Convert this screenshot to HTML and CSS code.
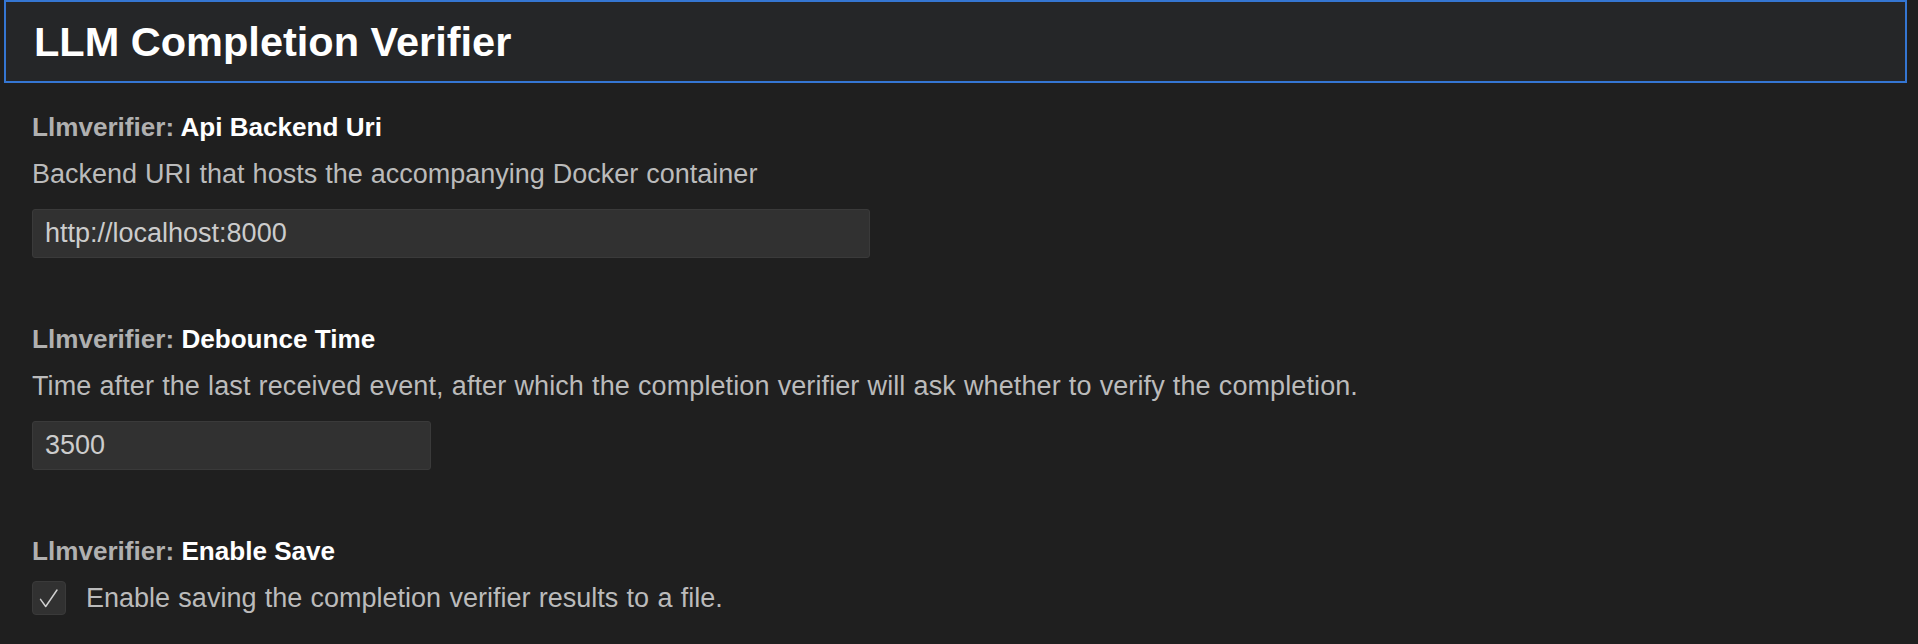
FILE: index.html
```html
<!DOCTYPE html>
<html lang="en">
<head>
<meta charset="utf-8">
<title>LLM Completion Verifier</title>
<link rel="stylesheet" href="styles.css">
</head>
<body>
  <header class="group-header">
    <h1 class="group-title">LLM Completion Verifier</h1>
  </header>
  <main class="settings">
    <section class="setting">
      <div class="setting-label"><span class="category">Llmverifier: </span><span class="name">Api Backend Uri</span></div>
      <div class="setting-desc">Backend URI that hosts the accompanying Docker container</div>
      <div class="text-input wide">http://localhost:8000</div>
    </section>
    <section class="setting">
      <div class="setting-label"><span class="category">Llmverifier: </span><span class="name">Debounce Time</span></div>
      <div class="setting-desc long">Time after the last received event, after which the completion verifier will ask whether to verify the completion.</div>
      <div class="text-input narrow">3500</div>
    </section>
    <section class="setting">
      <div class="setting-label"><span class="category">Llmverifier: </span><span class="name">Enable Save</span></div>
      <div class="check-row">
        <span class="checkbox">
          <svg viewBox="0 0 34 34" width="34" height="34" aria-hidden="true"><path d="M8 18.5 L13.5 26 L25.5 8.5" fill="none" stroke="#cfcfcf" stroke-width="1.6" stroke-linecap="round" stroke-linejoin="round"/></svg>
        </span>
        <span class="check-text">Enable saving the completion verifier results to a file.</span>
      </div>
    </section>
  </main>
</body>
</html>
```
FILE: styles.css
```css
html, body {
  margin: 0;
  padding: 0;
  background: #1f1f1f;
  height: 100%;
}
body {
  font-family: "Liberation Sans", Arial, sans-serif;
  color: #cccccc;
  overflow: hidden;
}
.group-header {
  margin: 0 11px 0 4px;
  height: 83px;
  box-sizing: border-box;
  border: 2px solid #3576d2;
  background: #252628;
  display: flex;
  align-items: center;
  padding-left: 28px;
}
.group-title {
  margin: 0;
  font-size: 41.5px;
  font-weight: 700;
  color: #ffffff;
  line-height: 50px;
}
.settings {
  padding: 26px 0 0 32px;
  display: flex;
  flex-direction: column;
  gap: 63px;
}
.setting {
  display: flex;
  flex-direction: column;
}
.setting-label {
  font-size: 26.1px;
  line-height: 36px;
  white-space: nowrap;
}
.category {
  color: #bdbdbd;
  font-weight: 700;
  opacity: 0.92;
}
.name {
  color: #ffffff;
  font-weight: 700;
}
.setting-desc {
  margin-top: 11px;
  font-size: 27px;
  line-height: 36px;
  color: #bbbbbb;
  white-space: nowrap;
  word-spacing: 0.5px;
}
.setting-desc.long {
  letter-spacing: 0.1px;
}
.text-input {
  margin-top: 17px;
  height: 49px;
  box-sizing: border-box;
  background: #313131;
  border: 1px solid #3a3a3a;
  border-radius: 3px;
  padding: 0 12px;
  font-size: 27px;
  line-height: 47px;
  color: #cccccc;
}
.wide { width: 838px; }
.narrow { width: 399px; }
.check-row {
  margin-top: 11px;
  display: flex;
  align-items: center;
  gap: 20px;
}
.checkbox {
  width: 34px;
  height: 34px;
  box-sizing: border-box;
  background: #313131;
  border: 1px solid #3a3a3a;
  border-radius: 4px;
  display: flex;
  align-items: center;
  justify-content: center;
  flex: none;
}
.checkbox svg { display: block; }
.check-text {
  font-size: 27px;
  line-height: 36px;
  color: #bbbbbb;
  word-spacing: 0.8px;
}
```
